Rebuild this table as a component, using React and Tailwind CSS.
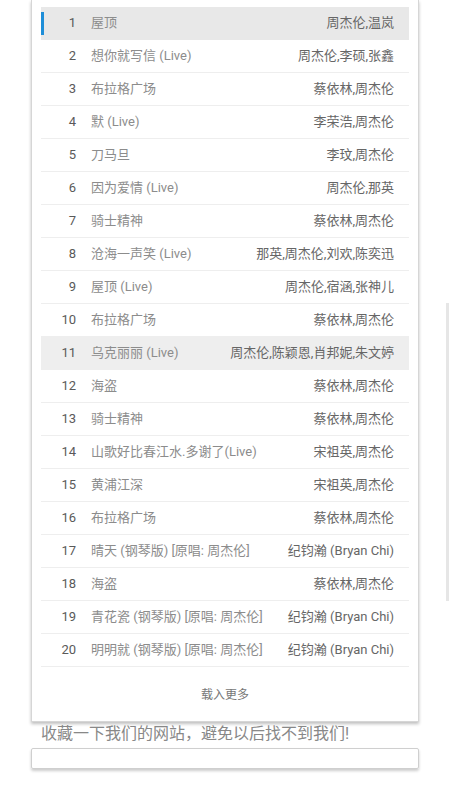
import React from "react";

const songs = [
  { no: 1, title: "屋顶", artist: "周杰伦,温岚", active: true },
  { no: 2, title: "想你就写信 (Live)", artist: "周杰伦,李硕,张鑫" },
  { no: 3, title: "布拉格广场", artist: "蔡依林,周杰伦" },
  { no: 4, title: "默 (Live)", artist: "李荣浩,周杰伦" },
  { no: 5, title: "刀马旦", artist: "李玟,周杰伦" },
  { no: 6, title: "因为爱情 (Live)", artist: "周杰伦,那英" },
  { no: 7, title: "骑士精神", artist: "蔡依林,周杰伦" },
  { no: 8, title: "沧海一声笑 (Live)", artist: "那英,周杰伦,刘欢,陈奕迅" },
  { no: 9, title: "屋顶 (Live)", artist: "周杰伦,宿涵,张神儿" },
  { no: 10, title: "布拉格广场", artist: "蔡依林,周杰伦" },
  { no: 11, title: "乌克丽丽 (Live)", artist: "周杰伦,陈颖恩,肖邦妮,朱文婷", hover: true },
  { no: 12, title: "海盗", artist: "蔡依林,周杰伦" },
  { no: 13, title: "骑士精神", artist: "蔡依林,周杰伦" },
  { no: 14, title: "山歌好比春江水.多谢了(Live)", artist: "宋祖英,周杰伦" },
  { no: 15, title: "黄浦江深", artist: "宋祖英,周杰伦" },
  { no: 16, title: "布拉格广场", artist: "蔡依林,周杰伦" },
  { no: 17, title: "晴天 (钢琴版) [原唱: 周杰伦]", artist: "纪钧瀚 (Bryan Chi)" },
  { no: 18, title: "海盗", artist: "蔡依林,周杰伦" },
  { no: 19, title: "青花瓷 (钢琴版) [原唱: 周杰伦]", artist: "纪钧瀚 (Bryan Chi)" },
  { no: 20, title: "明明就 (钢琴版) [原唱: 周杰伦]", artist: "纪钧瀚 (Bryan Chi)" },
];

const font = { fontFamily: "Roboto, 'Noto Sans CJK SC', sans-serif" };

const App = () => {
  return (
    <div className="relative min-h-[800px] bg-white" style={font}>
      {/* Song list card */}
      <div className="mx-[31px] bg-white border-x border-b border-[#d6d6d6] shadow-[0_2px_3px_rgba(0,0,0,0.25)] pt-[7px] px-[9px]">
        {songs.map((s) => (
          <div
            key={s.no}
            className={`relative flex items-center h-[33px] text-[13px] border-b ${
              s.active ? "bg-[#e8e8e8] border-transparent" : s.hover ? "bg-[#eeeeee] border-transparent" : "border-[#eeeeee]"
            }`}
          >
            {s.active && <div className="absolute left-0 top-[5px] h-[23px] w-[3px] bg-[#1e8ed8]" />}
            <div className="w-[35px] text-right text-[#5a5a5a]">{s.no}</div>
            <div className="flex-1 pl-[15px] text-[#8c8c8c] whitespace-nowrap">{s.title}</div>
            <div className="pr-[15px] text-right text-[#666] whitespace-nowrap">{s.artist}</div>
          </div>
        ))}
        <div className="h-[54px] flex items-center justify-center text-[12px] text-[#777] pt-[1px]">
          载入更多
        </div>
      </div>

      <div className="mx-[31px] px-[10px] text-[16px] leading-[26px] text-[#888] -mt-[1px]">
        收藏一下我们的网站，避免以后找不到我们!
      </div>

      <div className="mx-[31px] mt-[1px] h-[21px] rounded-[2px] border border-[#cfcfcf] shadow-[0_2px_3px_rgba(0,0,0,0.2)]" />

      {/* scrollbar thumb */}
      <div className="absolute left-[446px] top-[303px] h-[298px] w-[3px] bg-[#e6e6e6]" />
    </div>
  );
};

export default App;
